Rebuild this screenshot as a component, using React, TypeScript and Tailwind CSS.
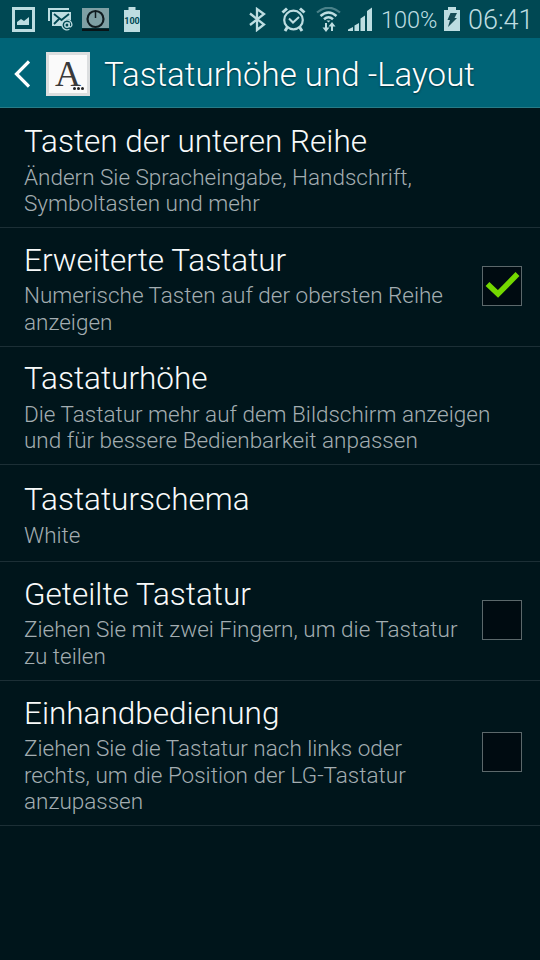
import type { ReactNode } from "react";

type Setting = {
  title: string;
  summary: string[];
  height: string;
  checked?: boolean;
};

const settings: Setting[] = [
  {
    title: "Tasten der unteren Reihe",
    summary: ["Ändern Sie Spracheingabe, Handschrift,", "Symboltasten und mehr"],
    height: "h-[120px] pt-0.5"
  },
  {
    title: "Erweiterte Tastatur",
    summary: ["Numerische Tasten auf der obersten Reihe", "anzeigen"],
    height: "h-[119px]",
    checked: true
  },
  {
    title: "Tastaturhöhe",
    summary: ["Die Tastatur mehr auf dem Bildschirm anzeigen", "und für bessere Bedienbarkeit anpassen"],
    height: "h-[118px]"
  },
  {
    title: "Tastaturschema",
    summary: ["White"],
    height: "h-[97px]"
  },
  {
    title: "Geteilte Tastatur",
    summary: ["Ziehen Sie mit zwei Fingern, um die Tastatur", "zu teilen"],
    height: "h-[119px]",
    checked: false
  },
  {
    title: "Einhandbedienung",
    summary: [
      "Ziehen Sie die Tastatur nach links oder",
      "rechts, um die Position der LG-Tastatur",
      "anzupassen"
    ],
    height: "h-[145px]",
    checked: false
  }
];

function Icon({ className, box, children }: { className: string; box: string; children: ReactNode }) {
  return (
    <svg className={`block shrink-0 ${className}`} viewBox={box} fill="none" stroke="none">
      {children}
    </svg>
  );
}

function StatusBar() {
  return (
    <div className="flex h-[38px] items-start bg-[#004853] pl-3 pt-[7px] text-[#bddde1]">
      <Icon className="h-[25px] w-[23px]" box="0 0 23 25">
        <rect x="1.5" y="1.5" width="20" height="22" stroke="currentColor" strokeWidth="3" />
        <path d="M5 18v-3l4-3 3 2 5-4v8z" fill="currentColor" />
      </Icon>
      <Icon className="ml-[13px] h-[25px] w-[25px]" box="0 0 25 25">
        <path d="M1 14V2h20" stroke="currentColor" strokeWidth="2" />
        <path d="M4 5h19v8.500a6 6 0 0 0-9 5.500H4z" fill="currentColor" />
        <path d="M6 7l7.500 6L21 7M6 17l5-5" stroke="#004853" strokeWidth="1.800" />
        <circle cx="19" cy="18" r="2.200" stroke="currentColor" strokeWidth="1.400" />
        <path d="M21.200 15.500v3c0 2.200 3 1.600 2.700-1.200a5 5 0 1 0-2.500 5" stroke="currentColor" strokeWidth="1.300" />
      </Icon>
      <Icon className="ml-[9px] h-[25px] w-[27px]" box="0 0 27 25">
        <path d="M0 1h27v20H0z" fill="#7fa0a4" />
        <path d="M0 21.500h27v2.500H0z" fill="#081417" />
        <circle cx="13.500" cy="12" r="8" stroke="#101c20" strokeWidth="2.200" />
        <path d="M13.500 5v6" stroke="#101c20" strokeWidth="1.500" />
      </Icon>
      <div className="relative ml-3.5 h-[25px] w-[18px]">
        <Icon className="h-[25px] w-[18px]" box="0 0 18 25">
          <path d="M5.500 0h7v3H17v22H1V3h4.500z" fill="currentColor" />
        </Icon>
        <span className="absolute left-0 top-[8px] w-[18px] text-center text-[9px] leading-3 font-bold text-[#004853]">
          100
        </span>
      </div>
      <Icon className="ml-[108px] h-[25px] w-[18px]" box="0 0 18 25">
        <path d="M1 6.500l14 11-7 5.500V2l7 5-14 11" stroke="currentColor" strokeWidth="2.300" />
      </Icon>
      <Icon className="ml-[14px] h-[25px] w-[25px]" box="0 0 25 25">
        <circle cx="12.500" cy="13" r="9.300" stroke="currentColor" strokeWidth="2.200" />
        <path d="M8 11.500l4 4 6-5.500" stroke="currentColor" strokeWidth="2" />
        <path d="M1.500 5.500l4.500-4M19 1.500l4.500 4M6.500 20l-2.500 4M18.500 20l2.500 4" stroke="currentColor" strokeWidth="3" />
      </Icon>
      <Icon className="ml-[10px] h-[26px] w-[25px]" box="0 0 25 26">
        <path d="M1 4.500Q12.500-5 24 4.500" stroke="#4a828a" strokeWidth="2.200" transform="translate(0 1)" />
        <path d="M4.500 9Q12.500 2 20.500 9M8 12.300q4.500-4 9 0" stroke="currentColor" strokeWidth="2.500" />
        <path d="M10.500 13.500h4l-2 2z" fill="currentColor" />
        <path d="M10 16v6M16 24v-6" stroke="currentColor" strokeWidth="2" />
        <path d="M6.500 20.500h7L10 25zM12.500 19.500h7L16 15z" fill="currentColor" />
      </Icon>
      <Icon className="ml-[7px] h-[25px] w-[25px]" box="0 0 25 25">
        <path d="M0 24v-1.500l5-2.500v4zM6.500 24v-5.500l4.500-2.500v8zM12.500 24V11.500l4.500-3V24zM19 24V4l5-3.500V24z" fill="currentColor" />
      </Icon>
      <span className="ml-[8px] w-[60px] text-[23.500px] leading-[27px] whitespace-nowrap font-light">100%</span>
      <Icon className="ml-[3px] h-[25px] w-[16px]" box="0 0 16 25">
        <path d="M4 0h8v3h4v21H0V3h4z" fill="currentColor" />
        <path d="M6.500 6h6.500l-2.500 5H13L4 20l2-7H3.500z" fill="#174c55" />
      </Icon>
      <span className="ml-[8px] text-[27px] leading-[26px] font-light">06:41</span>
    </div>
  );
}

function TitleBar() {
  return (
    <div className="flex h-[70px] items-center border-b border-[#277b87] bg-[#006477] pt-[3px] pl-[14px]">
      <Icon className="h-7 w-4" box="0 0 16 28">
        <path d="M15 1.500L2.500 14 15 26.500" stroke="#fff" strokeWidth="3.200" />
      </Icon>
      <div className="relative ml-4 h-[44px] w-[44px] shrink-0 border-3 border-[#dcdedf] bg-[#fafafa]">
        <span className="absolute inset-x-0 top-0 text-center font-['Liberation_Serif',serif] text-[36px] leading-[38px] text-[#3a3a3a]">
          A
        </span>
        <div className="absolute right-[3px] bottom-[3px] flex gap-[1px]">
          <i className="size-[3px] rounded-full bg-[#222]" />
          <i className="size-[3px] rounded-full bg-[#222]" />
          <i className="size-[3px] rounded-full bg-[#222]" />
        </div>
      </div>
      <h1 className="ml-[14px] pt-[2px] text-[33px] leading-10 tracking-[0.04px] whitespace-nowrap font-light text-white [text-shadow:0_1px_2px_#00303a]">
        Tastaturhöhe und -Layout
      </h1>
    </div>
  );
}

function Checkbox({ checked }: { checked: boolean }) {
  return (
    <div className="mb-0.5 h-10 w-10 shrink-0 border border-[#5c686b] bg-[#000b11]">
      {checked && (
        <Icon className="h-[38px] w-[38px]" box="0 0 38 38">
          <path d="M4.500 17L15 27 34.500 7" stroke="#74d800" strokeWidth="5.500" />
        </Icon>
      )}
    </div>
  );
}

function SettingRow({ title, summary, height, checked }: Setting) {
  return (
    <div className={`flex items-center border-b border-[#1c2f36] pr-[18px] pl-6 ${height}`}>
      <div className="flex-1 pt-[3px] whitespace-nowrap">
        <h2 className="text-[31.500px] leading-[37px] font-light text-[#f8fafa]">{title}</h2>
        <p className="pt-[3.500px] text-[22.500px] leading-[26.500px] font-light text-[#a3adb1]">
          {summary.map((line) => (
            <span key={line} className="block">
              {line}
            </span>
          ))}
        </p>
      </div>
      {checked !== undefined && <Checkbox checked={checked} />}
    </div>
  );
}

export default function App() {
  return (
    <div className="h-[960px] w-[540px] overflow-hidden bg-[#00151b] font-[Roboto,sans-serif]">
      <StatusBar />
      <TitleBar />
      {settings.map((setting) => (
        <SettingRow key={setting.title} {...setting} />
      ))}
    </div>
  );
}
